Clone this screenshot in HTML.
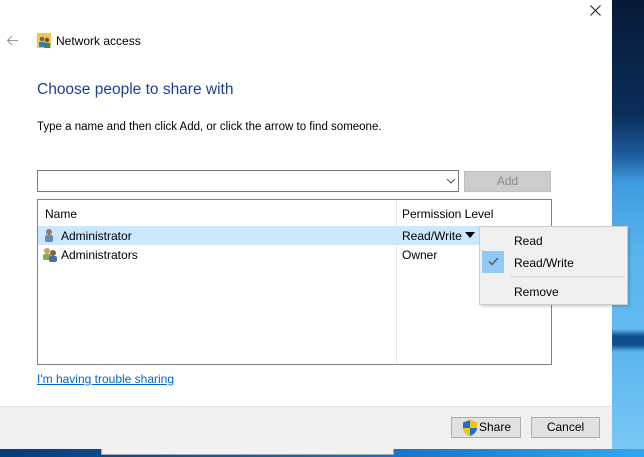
<!DOCTYPE html>
<html><head><style>
*{margin:0;padding:0;box-sizing:border-box}
body{width:644px;height:457px;overflow:hidden;position:relative;font-family:"Liberation Sans",sans-serif;font-size:12px;color:#000;background:#0a2a55}
.bg{position:absolute;left:612px;top:0;width:32px;height:457px;background:linear-gradient(180deg,#061a36 0%,#0b2d5a 25%,#1d5da0 34%,#3f9be0 40%,#58b4ee 55%,#62baf0 72%,#0f4f8c 73.5%,#0f4f8c 75.5%,#5bb6ee 77%,#7cc8f5 100%)}
.bot{position:absolute;left:0;top:449px;width:644px;height:8px;background:linear-gradient(90deg,#0a3a78,#1572c8 60%,#30a8f0)}
.wbar{position:absolute;left:101px;top:449px;width:293px;height:6px;background:#f2f2f2;border:1px solid #aaa;border-top:none}
.dlg{position:absolute;left:0;top:0;width:612px;height:449px;background:#fff}
.abs{position:absolute}
.footer{position:absolute;left:0;top:406px;width:612px;height:43px;background:#f0f0f0;border-top:1px solid #dfdfdf}
.btn{position:absolute;top:417px;height:21px;background:#e1e1e1;border:1px solid #adadad;text-align:center;line-height:19px}
</style></head><body>
<div class="bg"></div>
<div class="bot"></div>
<div class="dlg">
  <svg class="abs" style="left:590px;top:5px" width="11" height="11"><path d="M0.5 0.5 L10.5 10.5 M10.5 0.5 L0.5 10.5" stroke="#222" stroke-width="1.1"/></svg>
  <svg class="abs" style="left:6px;top:35px" width="13" height="11"><path d="M12 5.5 H1.5 M6 1 L1.5 5.5 L6 10" stroke="#999" stroke-width="1.1" fill="none"/></svg>
  <svg class="abs" style="left:37px;top:33px" width="14" height="15" viewBox="0 0 14 15"><rect x="0" y="0" width="14" height="15" fill="#f0c850"/><circle cx="5" cy="6" r="2.3" fill="#8a5a3a"/><rect x="2" y="9" width="6" height="5" fill="#3a7ab8"/><circle cx="10" cy="7" r="2.2" fill="#6a4a30"/><rect x="7" y="10" width="6" height="5" fill="#2a8a5a"/></svg>
  <div class="abs" style="left:56px;top:34px">Network access</div>
  <div class="abs" style="left:37px;top:81px;font-size:15.5px;color:#1c3f94">Choose people to share with</div>
  <div class="abs" style="left:37px;top:121px;font-size:11.5px">Type a name and then click Add, or click the arrow to find someone.</div>
  <div class="abs" style="left:37px;top:170px;width:422px;height:22px;border:1px solid #7a7a7a"></div>
  <svg class="abs" style="left:446px;top:178px" width="10" height="6"><path d="M1 1 L5 5 L9 1" stroke="#555" fill="none"/></svg>
  <div class="abs" style="left:464px;top:171px;width:87px;height:21px;background:#cccccc;border:1px solid #bfbfbf;color:#8a8a8a;text-align:center;line-height:19px">Add</div>
  <div class="abs" style="left:37px;top:199px;width:515px;height:166px;border:1px solid #828282"></div>
  <div class="abs" style="left:396px;top:200px;width:1px;height:163px;background:#e5e5e5"></div>
  <div class="abs" style="left:45px;top:207px">Name</div>
  <div class="abs" style="left:402px;top:207px">Permission Level</div>
  <div class="abs" style="left:38px;top:226px;width:441px;height:19px;background:#cce8ff"></div>
  <svg class="abs" style="left:43px;top:228px" width="12" height="15"><circle cx="6" cy="4" r="3" fill="#9a7a5a"/><rect x="2" y="7" width="8" height="7" rx="2" fill="#6a8ab0"/></svg>
  <div class="abs" style="left:61px;top:229px">Administrator</div>
  <svg class="abs" style="left:42px;top:247px" width="17" height="15"><circle cx="5" cy="4" r="3" fill="#c9a060"/><rect x="1" y="7" width="8" height="6" rx="2" fill="#7ab050"/><circle cx="11" cy="6" r="3" fill="#8a6040"/><rect x="7" y="9" width="8" height="6" rx="2" fill="#4a70a0"/></svg>
  <div class="abs" style="left:61px;top:248px">Administrators</div>
  <div class="abs" style="left:402px;top:229px">Read/Write</div>
  <svg class="abs" style="left:465px;top:232px" width="10" height="6"><path d="M0 0 H10 L5 6 Z" fill="#000"/></svg>
  <div class="abs" style="left:402px;top:248px">Owner</div>
  <div class="abs" style="left:37px;top:372px;color:#0066cc;text-decoration:underline">I'm having trouble sharing</div>
  <div class="footer"></div>
  <div class="btn" style="left:451px;width:70px"><svg style="position:absolute;left:11px;top:2px" width="14" height="16" viewBox="0 0 14 16"><path d="M7 0 L14 2.5 V8 C14 12 10 15 7 16 C4 15 0 12 0 8 V2.5 Z" fill="#1f6fc8"/><path d="M7 0 L14 2.5 V8 H7 Z" fill="#f5c400"/><path d="M7 8 H0 C0 12 4 15 7 16 Z" fill="#f5c400"/></svg><span style="position:absolute;left:27px">Share</span></div>
  <div class="btn" style="left:531px;width:69px">Cancel</div>
</div>
<div class="abs" style="left:479px;top:226px;width:149px;height:79px;background:#f0f0f0;border:1px solid #cccccc;box-shadow:2px 2px 2px rgba(0,0,0,0.15)">
  <div class="abs" style="left:34px;top:7px">Read</div>
  <div class="abs" style="left:2px;top:24px;width:22px;height:22px;background:#90c8f6"></div>
  <svg class="abs" style="left:8px;top:30px" width="11" height="9"><path d="M1 4.5 L4 7.5 L10 1" stroke="#555" stroke-width="1.3" fill="none"/></svg>
  <div class="abs" style="left:34px;top:29px">Read/Write</div>
  <div class="abs" style="left:30px;top:49px;width:115px;height:1px;background:#d7d7d7"></div>
  <div class="abs" style="left:34px;top:58px">Remove</div>
</div>
<div class="wbar"></div>
</body></html>
